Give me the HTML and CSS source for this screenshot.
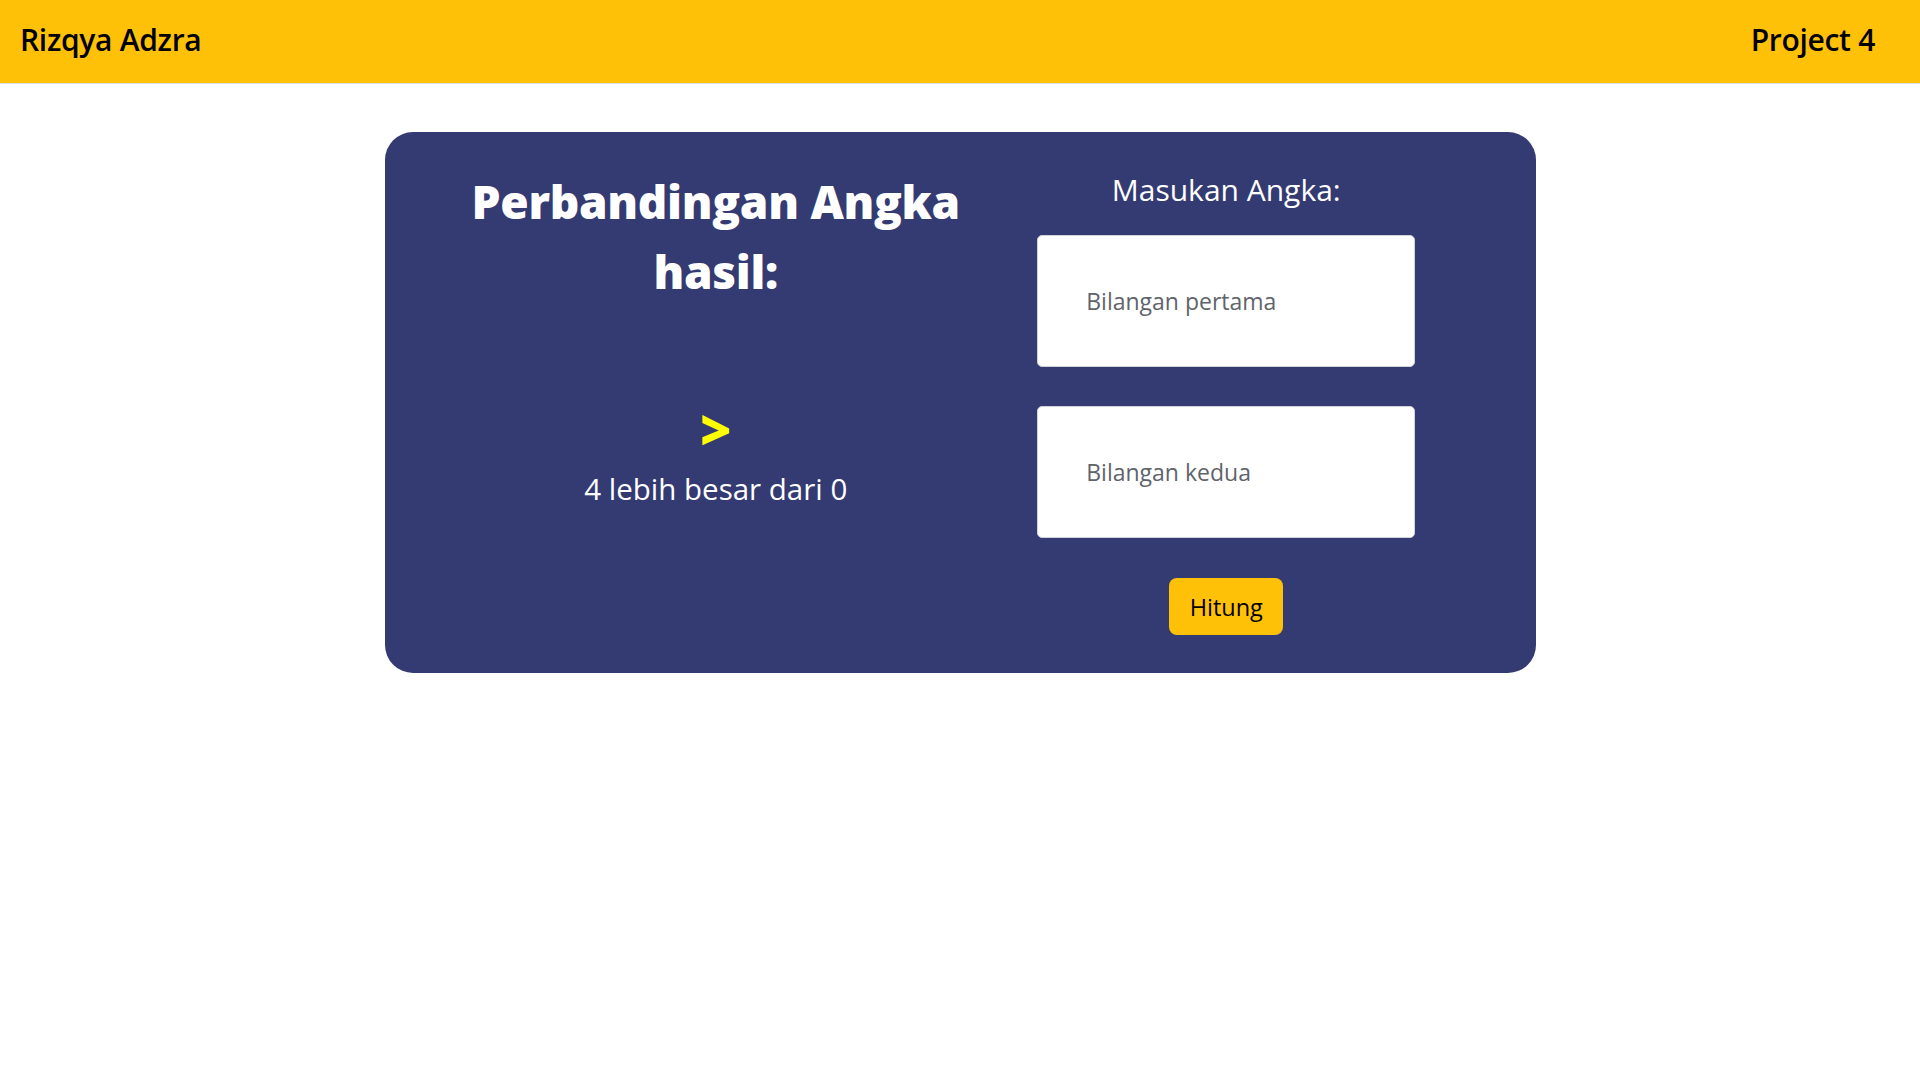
FILE: index.html
```html
<!DOCTYPE html>
<html lang="id">
<head>
<meta charset="utf-8">
<title>Perbandingan Angka</title>
<link rel="stylesheet" href="styles.css">
</head>
<body>
<header class="topbar">
  <div class="brand">Rizqya Adzra</div>
  <div class="project">Project 4</div>
</header>
<main class="page">
  <section class="card">
    <div class="result">
      <h1 class="title">Perbandingan Angka<br>hasil:</h1>
      <div class="sign">&gt;</div>
      <p class="message">4 lebih besar dari 0</p>
    </div>
    <form class="inputs">
      <label class="label">Masukan Angka:</label>
      <input class="field" type="text" placeholder="Bilangan pertama">
      <input class="field" type="text" placeholder="Bilangan kedua">
      <button class="btn" type="button">Hitung</button>
    </form>
  </section>
</main>
</body>
</html>
```
FILE: styles.css
```css
* { box-sizing: border-box; }
body {
  margin: 0;
  font-family: "Open Sans", "Noto Sans", sans-serif;
  background: #ffffff;
  color: #000;
}
.topbar {
  height: 84px;
  background: #ffc107;
  display: flex;
  align-items: center;
  justify-content: space-between;
  padding: 0 45px 5px 20px;
  border-bottom: 1px solid #dde2e8;
}
.brand, .project {
  font-size: 30px;
  font-weight: 600;
  letter-spacing: -0.3px;
}
.page {
  padding-top: 48px;
}
.card {
  width: 1151px;
  height: 541px;
  margin: 0 auto;
  background: #343a72;
  border-radius: 28px;
  display: grid;
  grid-template-columns: 1fr 1fr;
  padding: 0 54px 0 76px;
  color: #fff;
}
.result {
  display: flex;
  flex-direction: column;
  align-items: center;
  text-align: center;
  padding-top: 34px;
}
.title {
  margin: 0;
  font-size: 46px;
  font-weight: 800;
  line-height: 70px;
  letter-spacing: -0.3px;
}
.sign {
  margin-top: 96px;
  font-size: 54px;
  font-weight: 800;
  line-height: 54px;
  color: #ffff00;
}
.message {
  margin: 13px 0 0;
  font-size: 29.5px;
  line-height: 40px;
}
.inputs {
  display: flex;
  flex-direction: column;
  align-items: center;
  padding-top: 36px;
}
.label {
  font-size: 30px;
  line-height: 44px;
}
.field {
  width: 378px;
  height: 132px;
  margin-top: 23px;
  border: 1px solid #ced4da;
  border-radius: 5px;
  padding: 0 48px;
  font-family: inherit;
  font-size: 23px;
  color: #495057;
  background: #fff;
}
.field + .field { margin-top: 39px; }
.field::placeholder { color: #5f646b; }
.btn {
  margin-top: 40px;
  width: 114px;
  height: 57px;
  border: 0;
  border-radius: 8px;
  background: #ffc107;
  font-family: inherit;
  font-size: 23.5px;
  color: #000;
  cursor: pointer;
}
```
